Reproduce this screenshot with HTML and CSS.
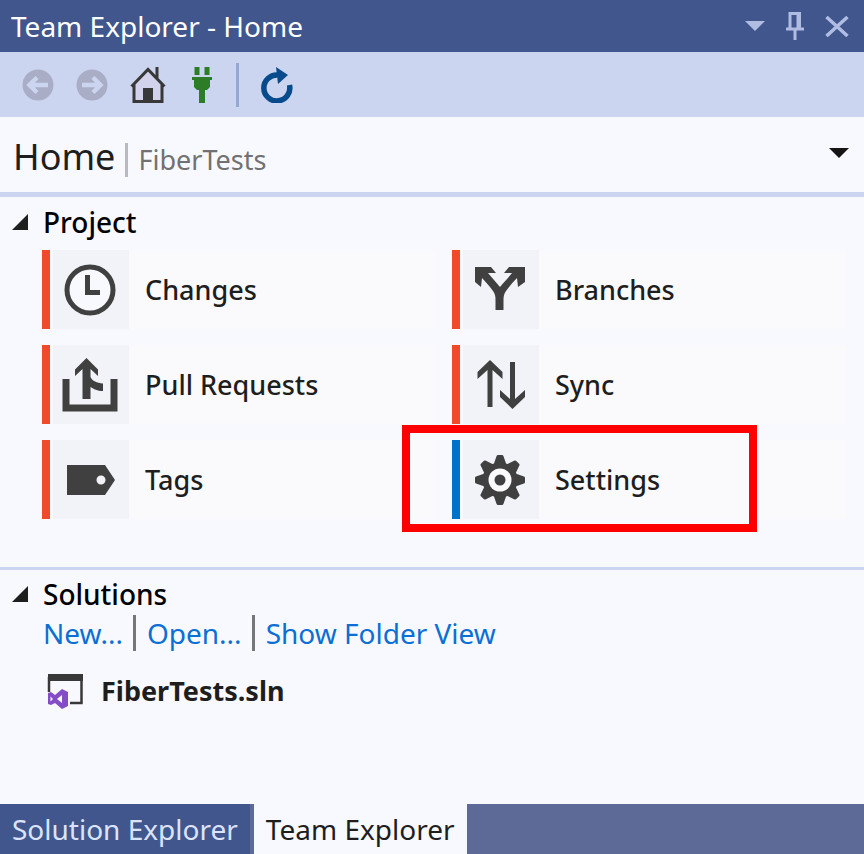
FILE: index.html
```html
<!DOCTYPE html>
<html lang="en">
<head>
<meta charset="utf-8">
<title>Team Explorer - Home</title>
<link rel="stylesheet" href="styles.css">
</head>
<body>
<div class="panel">
  <header class="titlebar">
    <h1 class="titlebar-text">Team Explorer - Home</h1>
    <div class="window-actions">
      <button type="button" aria-label="Window position"><svg width="20" height="10" viewBox="0 0 20 10"><path d="M0 0h20L10 10z" fill="currentColor"/></svg></button>
      <button type="button" aria-label="Auto hide"><svg width="18" height="28" viewBox="0 0 18 28"><path fill="none" stroke="currentColor" stroke-width="3" d="M4 17V1.500h9V17M0 17h18M9 17v11"/><path d="M10.500 0H15v17h-4.500z" fill="currentColor"/></svg></button>
      <button type="button" aria-label="Close"><svg width="24" height="21" viewBox="0 0 24 21"><path d="M1.500 1l21 19M22.500 1l-21 19" fill="none" stroke="currentColor" stroke-width="3.500"/></svg></button>
    </div>
  </header>

  <nav class="toolbar" aria-label="Team Explorer">
    <button type="button" aria-label="Back" disabled><svg width="32" height="32" viewBox="0 0 32 32"><circle cx="16" cy="16" r="15.500" fill="#a9aec6"/><path d="M26 16H8M15 8.500L7.500 16l7.500 7.500" fill="none" stroke="#ccd5f0" stroke-width="4.500"/></svg></button>
    <button type="button" aria-label="Forward" disabled><svg width="32" height="32" viewBox="0 0 32 32"><circle cx="16" cy="16" r="15.500" fill="#a9aec6"/><path d="M6 16h18M17 8.500l7.500 7.500-7.500 7.500" fill="none" stroke="#ccd5f0" stroke-width="4.500"/></svg></button>
    <button type="button" aria-label="Home"><svg width="36" height="36" viewBox="0 0 36 36"><path d="M4 17L18 3l14 14v17H4z" fill="#d3d2ec"/><path d="M1.500 19.500L18 2.500l16.500 17M4 17v17.500h28V17M27 0v11" fill="none" stroke="#383838" stroke-width="3"/><path d="M13 21h10v13H13z" fill="#383838"/></svg></button>
    <button type="button" class="plug" aria-label="Manage Connections"><svg width="20" height="36" viewBox="0 0 20 36"><path d="M2.500 0h5v8h-5zM12.500 0h5v8h-5zM0 10h20v3h-2v7l-3 3h-2v13H7V23H5l-3-3v-7H0z" fill="#2d7d27"/></svg></button>
    <span class="divider"></span>
    <button type="button" aria-label="Refresh"><svg width="32" height="36" viewBox="0 0 32 36"><path d="M17 8A13 13 0 1 0 28.500 18" fill="none" stroke="#084b8c" stroke-width="5.500"/><path d="M15 0l12 8-10 9z" fill="#084b8c"/></svg></button>
  </nav>

  <div class="page-head">
    <h2>Home</h2>
    <span class="page-rule"></span>
    <span class="page-project">FiberTests</span>
    <button type="button" class="page-menu" aria-label="Select page"><svg width="20" height="10" viewBox="0 0 20 10"><path d="M0 0h20L10 10z" fill="#151515"/></svg></button>
  </div>

  <main class="content">
    <section class="section section-project">
      <h3><svg width="16" height="16" viewBox="0 0 16 16"><path d="M16 0v16H0z" fill="#1e1e1e"/></svg>Project</h3>
      <div class="tiles">
        <button type="button" class="tile"><span class="tile-icon"><svg width="56" height="56" viewBox="0 0 56 56"><circle cx="28" cy="28" r="23" fill="#f8f9ff" stroke="#404040" stroke-width="5"/><path d="M25.500 13v17.500H38" fill="none" stroke="#404040" stroke-width="5"/></svg></span>Changes</button>
        <button type="button" class="tile"><span class="tile-icon"><svg width="56" height="56" viewBox="0 0 56 56"><path d="M3 5h16l5 6h-8c4 5 8 9 12 14 4-5 8-9 12-14h-8l5-6h16v15l-7 5-1-9c-4 4-8 9-11 13-2 3-2.500 5-2.500 9v10h-8V38c0-4-.5-6-2.500-9-3-4-7-9-11-13l-1 9-6-5z" fill="#404040"/></svg></span>Branches</button>
        <button type="button" class="tile"><span class="tile-icon"><svg width="56" height="56" viewBox="0 0 56 56"><path d="M4 22v29h48V22" fill="none" stroke="#404040" stroke-width="7"/><path d="M24.500 1L36 12.500V19l-7.500-7v8c2 4 6 6 12.500 6.500V34c-6 0-9-2-12.500-4v12h-8V12L13 19v-6.500z" fill="#404040"/></svg></span>Pull Requests</button>
        <button type="button" class="tile"><span class="tile-icon"><svg width="56" height="56" viewBox="0 0 56 56"><path d="M18 3l12.500 12v7L20.500 13v37h-5V13l-10 9v-7zM38 5h5v37l10-9v7L40.500 52 28 40v-7l10 9z" fill="#404040"/></svg></span>Sync</button>
        <button type="button" class="tile"><span class="tile-icon"><svg width="56" height="56" viewBox="0 0 56 56"><path fill-rule="evenodd" d="M5 13h38l10 15-10 15H5zM39 23.500a4.500 4.500 0 1 0 0 9 4.500 4.500 0 0 0 0-9z" fill="#404040"/></svg></span>Tags</button>
        <div class="highlighted">
          <button type="button" class="tile tile-blue"><span class="tile-icon"><svg width="56" height="56" viewBox="0 0 56 56"><g fill="#404040" stroke="#404040" stroke-width="3" stroke-linejoin="round"><path id="teeth" d="M26 4.500h4L34 16v24l-4 11.500h-4L22 40V16z"/><path d="M26 4.500h4L34 16v24l-4 11.500h-4L22 40V16z" transform="rotate(45 28 28)"/><path d="M26 4.500h4L34 16v24l-4 11.500h-4L22 40V16z" transform="rotate(90 28 28)"/><path d="M26 4.500h4L34 16v24l-4 11.500h-4L22 40V16z" transform="rotate(135 28 28)"/></g><circle cx="28" cy="28" r="17.500" fill="#404040"/><circle cx="28" cy="28" r="11.500" fill="#fafafc"/><circle cx="28" cy="28" r="5.500" fill="#404040"/></svg></span>Settings</button>
          <span class="callout"></span>
        </div>
      </div>
    </section>

    <section class="section section-solutions">
      <h3><svg width="16" height="16" viewBox="0 0 16 16"><path d="M16 0v16H0z" fill="#1e1e1e"/></svg>Solutions</h3>
      <div class="links"><a href="#new">New...</a><a href="#open">Open...</a><a href="#folder">Show Folder View</a></div>
      <div class="solution"><svg width="36" height="36" viewBox="0 0 36 36"><path d="M2 19V4M34.500 4v26H23" fill="none" stroke="#383838" stroke-width="2.500"/><path d="M1 1h35v7H1z" fill="#383838"/><path fill-rule="evenodd" d="M15 16l6 3v14l-6 3-7-6-4 2-3-1V20l3-1 4 3zM15 22l-5 4 5 4zM3.500 23.500v5L6 26z" fill="#854cc7"/></svg><span>FiberTests.sln</span></div>
    </section>
  </main>

  <div class="tabs" role="tablist">
    <button type="button" role="tab" aria-selected="false">Solution Explorer</button>
    <button type="button" role="tab" aria-selected="true">Team Explorer</button>
  </div>
</div>
</body>
</html>
```
FILE: styles.css
```css
* { box-sizing: border-box; }

body {
  margin: 0;
  background: #f8f9ff;
  color: #1e1e1e;
  font: 28px/36px "Noto Sans", "Open Sans", sans-serif;
}

h1, h2, h3 { margin: 0; font: inherit; }

button {
  border: 0;
  padding: 0;
  background: none;
  color: inherit;
  font: inherit;
}

svg { display: block; flex: none; }

.panel {
  display: flex;
  flex-direction: column;
  min-height: 100vh;
}

.titlebar {
  display: flex;
  align-items: center;
  justify-content: space-between;
  height: 52px;
  padding: 0 15px 0 11px;
  background: #40568d;
  color: #fff;
}

.window-actions {
  display: flex;
  align-items: center;
  gap: 21px;
  color: #b0bce2;
}

.toolbar {
  display: flex;
  align-items: center;
  height: 65px;
  padding: 0 22px;
  gap: 22px;
  background: #ccd5f0;
}

.toolbar .plug { margin: 0 2px 0 4px; }

.divider {
  width: 3px;
  height: 44px;
  background: #95a8d2;
}

.page-head {
  display: flex;
  align-items: baseline;
  height: 80px;
  padding: 22px 15px 0 13px;
  border-bottom: 5px solid #ccd5f0;
}

.page-head h2 { font-size: 36px; }

.page-rule {
  align-self: flex-start;
  width: 3px;
  height: 34px;
  margin: 4px 10px 0;
  background: #b9b9c0;
}

.page-project {
  color: #717171;
  font-size: 27px;
}

.page-menu {
  align-self: flex-start;
  margin: 9px 0 0 auto;
}

.content { flex: 1; }

.section h3 {
  display: flex;
  align-items: center;
  gap: 15px;
  padding-left: 12px;
  color: #000;
  font-weight: 500;
}

.section-project {
  padding: 7px 0 48px;
  border-bottom: 3px solid #ccd5f0;
}

.tiles {
  display: grid;
  grid-template-columns: 1fr 1fr;
  gap: 16px;
  padding: 10px 18px 0 42px;
}

.tile {
  display: flex;
  align-items: center;
  width: 100%;
  height: 79px;
  gap: 16px;
  border-left: 8px solid #f04a2a;
  background: #fafafc;
  font-size: 27px;
  font-weight: 500;
}

.tile-blue { border-color: #0072c9; }

.tile-icon {
  display: grid;
  place-items: center;
  width: 79px;
  height: 100%;
  padding-right: 3px;
  border-left: 3px solid #f8f9ff;
  background: #f2f3f8;
}

.highlighted { position: relative; }

.callout {
  position: absolute;
  inset: -15px 89px -13px -50px;
  border: 8px solid #f00;
  pointer-events: none;
}

.section-solutions { padding-top: 6px; }

.links {
  display: flex;
  padding: 3px 0 0 43px;
}

.links a {
  color: #0b6fd6;
  text-decoration: none;
}

.links a + a {
  margin-left: 10px;
  padding-left: 11px;
  border-left: 3px solid #777;
}

.solution {
  display: flex;
  align-items: center;
  gap: 18px;
  padding: 22px 0 0 47px;
  font-size: 27px;
  font-weight: 700;
}

.tabs {
  display: flex;
  height: 50px;
  background: #5d6a98;
}

.tabs button {
  padding: 0 12px;
  border-right: 4px solid #5d6a98;
  background: #40568d;
  color: #dbe3fa;
}

.tabs button[aria-selected="true"] {
  border: 0;
  background: #f8f9ff;
  color: #1e1e1e;
}
```
